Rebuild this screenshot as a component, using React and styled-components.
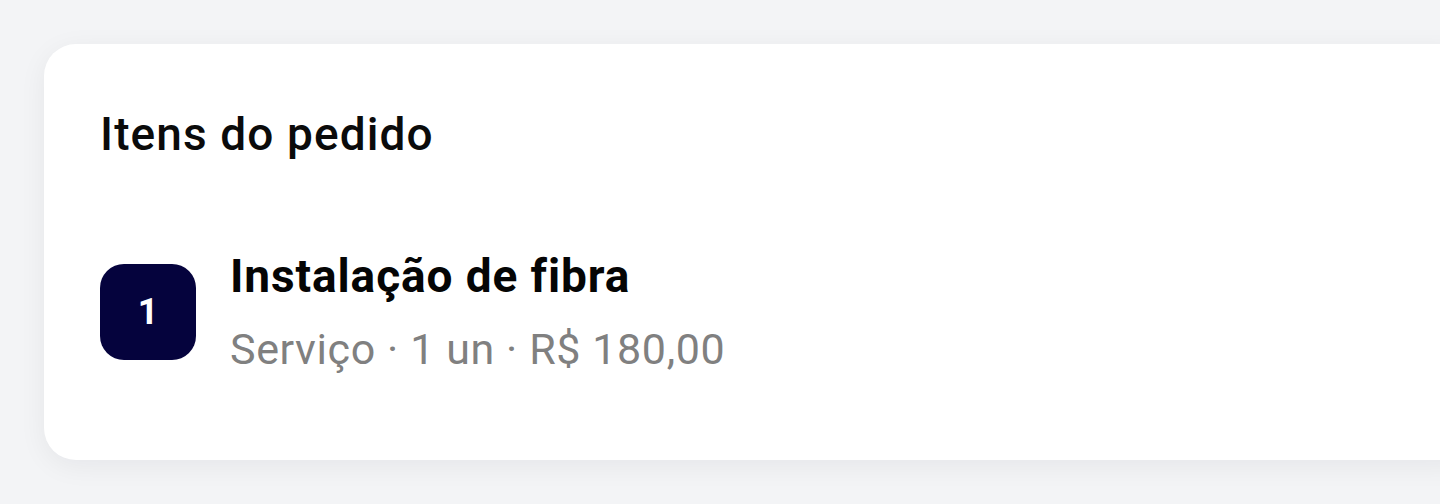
import React from 'react'
import styled, { createGlobalStyle } from 'styled-components'

// #region Styles
const GlobalStyle = createGlobalStyle`
  html, body {
    margin: 0;
    padding: 0;
    background: #f3f4f6;
    font-family: Roboto, "Noto Sans", Arial, sans-serif;
    overflow: hidden;
  }
`
const Page = styled.div`
  min-height: 504px;
  padding: 44px 0 0 44px;
  box-sizing: border-box;
  overflow: hidden;
`
const Card = styled.section`
  width: calc(100% + 40px);
  box-sizing: border-box;
  padding: 63px 56px 86px;
  border-radius: 32px;
  background: #ffffff;
  box-shadow: 0 6px 28px rgba(15, 23, 42, 0.06);
`
const Title = styled.h2`
  margin: 0;
  font-size: 46px;
  line-height: 54px;
  letter-spacing: 1.1px;
  font-weight: 500;
  color: #0b0b0b;
`
const List = styled.ul`
  list-style: none;
  margin: 88px 0 0;
  padding: 0;
`
const Row = styled.li`
  display: flex;
  align-items: center;
  gap: 34px;
`
const Badge = styled.div`
  display: flex;
  align-items: center;
  justify-content: center;
  flex: none;
  width: 96px;
  height: 96px;
  border-radius: 24px;
  background: #05033d;
  color: #ffffff;
  font-size: 36px;
  font-weight: 700;
`
const Info = styled.div`
  display: flex;
  flex-direction: column;
  gap: 21px;
`
const Name = styled.div`
  font-size: 46px;
  line-height: 54px;
  letter-spacing: 0.9px;
  font-weight: 700;
  color: #050505;
`
const Meta = styled.div`
  font-size: 43px;
  line-height: 50px;
  letter-spacing: 0.6px;
  color: #808080;
`
// #endregion

const items = [
  { id: 1, name: 'Instalação de fibra', kind: 'Serviço', qty: '1 un', price: 'R$ 180,00' },
]

const App = () => (
  <>
    <GlobalStyle />
    <Page>
      <Card>
        <Title>Itens do pedido</Title>

        <List>
          {items.map((item, i) => (
            <Row key={item.id}>
              <Badge>{i + 1}</Badge>
              <Info>
                <Name>{item.name}</Name>
                <Meta>{[item.kind, item.qty, item.price].join(' · ')}</Meta>
              </Info>
            </Row>
          ))}
        </List>
      </Card>
    </Page>
  </>
)

export default App
